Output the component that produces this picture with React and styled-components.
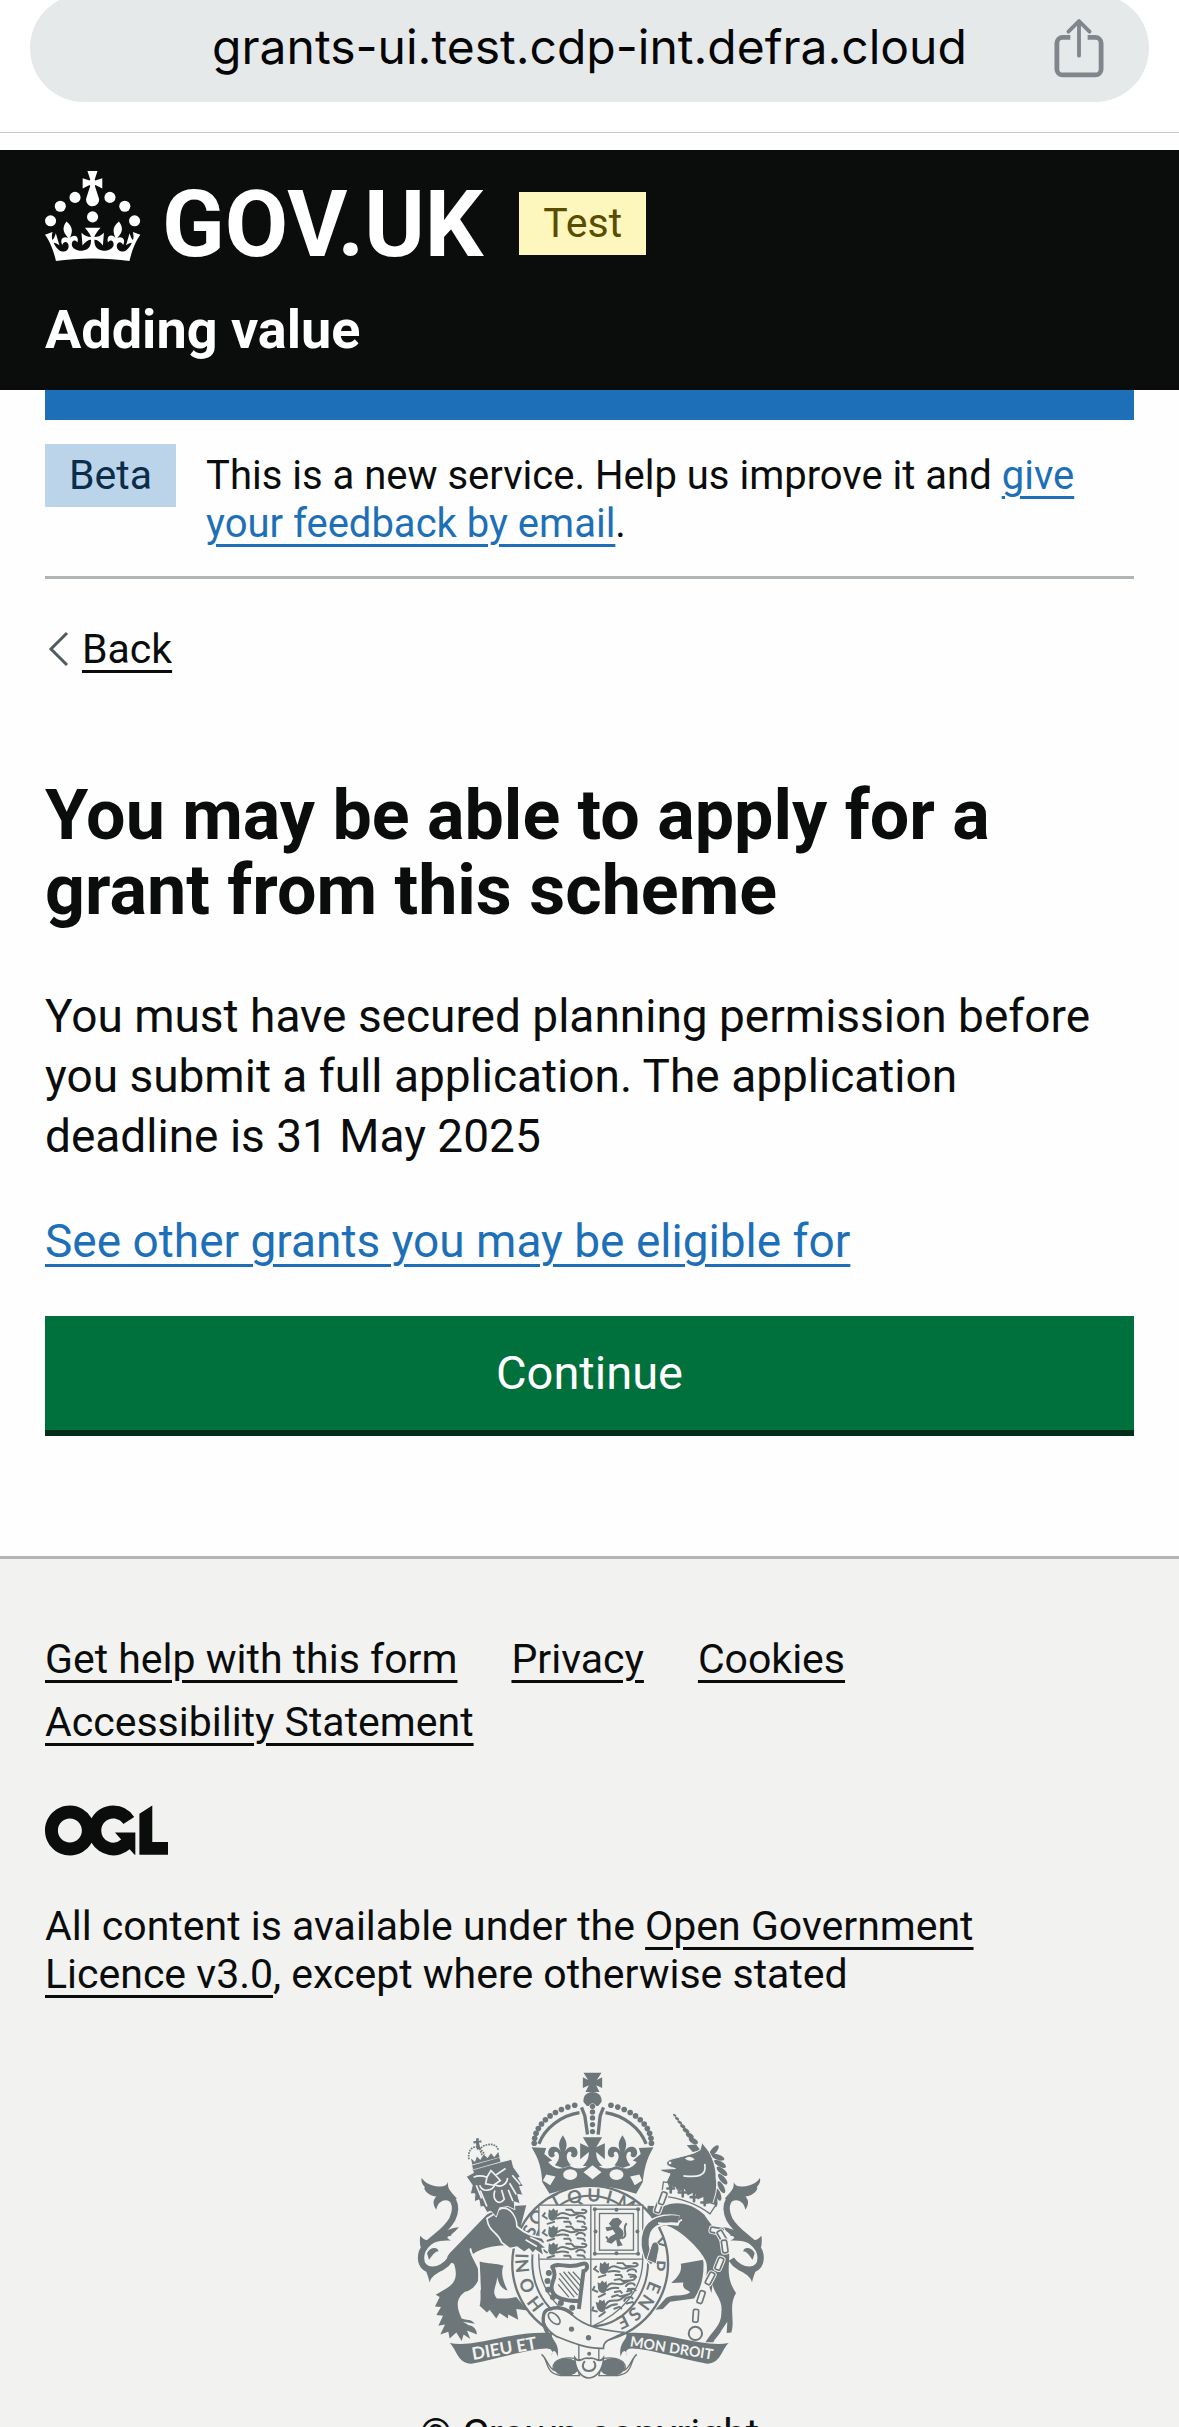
import React from "react";
import styled, { createGlobalStyle } from "styled-components";

const ink = "#0b0c0c";
const linkBlue = "#1d70b8";
const footerGrey = "#f2f2f0";
const crestGrey = "#6d7678";

const GlobalStyle = createGlobalStyle`
  *, *::before, *::after { box-sizing: border-box; }
  body {
    margin: 0;
    background: #fefefe;
    color: ${ink};
    font-family: Roboto, "Liberation Sans", sans-serif;
    font-size: 41px;
    line-height: 48px;
  }
`;

const Screen = styled.div`
  display: flex;
  flex-direction: column;
  height: 100vh;
  overflow: hidden;
`;

const BrowserChrome = styled.div`
  flex: none;
  padding: 0 30px 30px;
  margin-bottom: 17px;
  border-bottom: 1px solid #c6c8c8;
  background: #fff;
`;

const AddressBar = styled.div`
  display: grid;
  grid-template-columns: 120px 1fr 120px;
  align-items: center;
  height: 108px;
  margin-top: -6px;
  padding: 0 10px;
  border-radius: 54px;
  background: #e5e9ea;
`;

const AddressInput = styled.input`
  grid-column: 2;
  width: 100%;
  border: 0;
  padding: 0 0 2px;
  background: none;
  color: #050505;
  font: 400 48px/60px Inter, sans-serif;
  text-align: center;
`;

const ShareButton = styled.button`
  display: flex;
  justify-content: center;
  border: 0;
  padding: 0;
  background: none;
  color: #80868b;
`;

const Header = styled.header`
  flex: none;
  padding: 21px 45px 30px;
  background: ${ink};
  color: #fff;
`;

const LogoRow = styled.div`
  display: flex;
  align-items: flex-end;
  gap: 36px;
  margin-bottom: 39px;
`;

const LogoLink = styled.a`
  display: flex;
  align-items: flex-end;
  gap: 21px;
  color: inherit;
  text-decoration: none;
  font-size: 92px;
  line-height: 72px;
  font-weight: 700;
`;

const Tag = styled.strong`
  flex: none;
  padding: 7px 24px 8px;
  background: ${(p) => (p.$tone === "yellow" ? "#fdf6bd" : "#bbd4ea")};
  color: ${(p) => (p.$tone === "yellow" ? "#594d00" : "#0c2d4a")};
  font-weight: 400;
`;

const TestTag = styled(Tag)`
  margin-bottom: 6px;
`;

const ServiceLink = styled.a`
  display: block;
  color: inherit;
  text-decoration: none;
  font-size: 54px;
  line-height: 60px;
  font-weight: 700;
`;

const Container = styled.div`
  flex: none;
  padding: 0 45px;
`;

const BlueBar = styled.div`
  height: 30px;
  background: ${linkBlue};
`;

const PhaseBanner = styled.div`
  display: flex;
  align-items: flex-start;
  gap: 30px;
  padding: 24px 0 28px;
  border-bottom: 3px solid #b1b4b6;
`;

const PhaseText = styled.p`
  margin: 0;
  padding-top: 8px;
  font-size: 40px;
`;

const Link = styled.a`
  color: ${(p) => (p.$plain ? ink : linkBlue)};
  text-decoration: underline;
  text-decoration-thickness: 3px;
  text-underline-offset: 7px;
`;

const BackRow = styled.nav`
  display: flex;
  align-items: center;
  gap: 12px;
  padding: 46px 0 0 3px;
`;

const Main = styled.main`
  padding: 105px 0 120px;
`;

const Title = styled.h1`
  margin: 0 0 58px;
  font-size: 70px;
  line-height: 75px;
  font-weight: 700;
`;

const Paragraph = styled.p`
  margin: 0 0 45px;
  font-size: 46px;
  line-height: 60px;
`;

const ContinueButton = styled.button`
  display: block;
  width: 100%;
  border: 0;
  border-bottom: 6px solid #002d18;
  border-radius: 0;
  padding: 27px 30px;
  background: #00703c;
  color: #fff;
  font: inherit;
  font-size: 47px;
  line-height: 60px;
`;

const Footer = styled.footer`
  flex: none;
  border-top: 3px solid #b1b4b6;
  padding: 76px 45px 60px;
  background: ${footerGrey};
`;

const FooterLinks = styled.ul`
  display: flex;
  flex-wrap: wrap;
  gap: 15px 54px;
  margin: 0 0 59px;
  padding: 0;
  list-style: none;
`;

const Licence = styled.p`
  margin: 46px 0 74px;
  padding-right: 90px;
`;

const OglLogo = styled.svg`
  display: block;
`;

const Copyright = styled.a`
  display: flex;
  flex-direction: column;
  align-items: center;
  gap: 31px;
  color: ${ink};
  text-decoration: none;
`;

const ShareIcon = () => (
  <svg width="50" height="62" viewBox="0 0 52 62" fill="none" stroke="currentColor" strokeWidth="5" aria-hidden="true">
    <path d="M17 20H9a6 6 0 0 0-6 6v27a6 6 0 0 0 6 6h34a6 6 0 0 0 6-6V26a6 6 0 0 0-6-6h-8" />
    <path d="M26 39V4M15 14 26 3l11 11" strokeWidth="4" strokeLinejoin="round" strokeLinecap="round" />
  </svg>
);

const Crown = () => (
  <svg width="96" height="90" viewBox="0 0 64 60" fill="currentColor" aria-hidden="true">
    <circle cx="20" cy="17.6" r="3.7" />
    <circle cx="10.2" cy="23.5" r="3.7" />
    <circle cx="3.7" cy="33.2" r="3.7" />
    <circle cx="31.7" cy="30.6" r="3.7" />
    <circle cx="43.3" cy="17.6" r="3.7" />
    <circle cx="53.2" cy="23.5" r="3.7" />
    <circle cx="59.7" cy="33.2" r="3.7" />
    <path d="M33.1,9.8c.2-.1.3-.3.5-.5l4.6,2.4v-6.8l-4.6,1.5c-.1-.2-.3-.3-.5-.5l1.9-5.9h-6.7l1.9,5.9c-.2.1-.3.3-.5.5l-4.6-1.5v6.8l4.6-2.4c.1.2.3.3.5.5l-2.6,8c-.9,2.8,1.2,5.7,4.1,5.7h0c3,0,5.1-2.9,4.1-5.7l-2.6-8ZM37,37.9s-3.4,3.8-4.1,6.1c2.2,0,4.2-.5,6.4-2.8l-.7,8.5c-2-2.8-4.4-4.1-5.7-3.8.1,3.1.5,6.7,5.8,7.2,3.7.3,6.7-1.5,7-3.8.4-2.6-2-4.3-3.7-1.6-1.4-4.5,2.4-6.1,4.9-3.2-1.9-4.5-1.8-7.7,2.4-10.9,3,4,2.6,7.3-1.2,11.1,2.4-1.3,6.2,0,4,4.6-1.2-2.8-3.7-2.2-4.2.2-.3,1.7.7,3.7,3,4.2,1.9.3,4.7-.9,7-5.9-1.3,0-2.4.7-3.9,1.7l2.4-8c.6,2.3,1.4,3.7,2.2,4.5.6-1.6.5-2.8,0-5.3l5,1.8c-2.6,3.6-5.2,8.7-7.3,17.5-7.4-1.1-15.7-1.7-24.5-1.7h0c-8.8,0-17.1.6-24.5,1.7-2.1-8.9-4.7-13.9-7.3-17.5l5-1.8c-.5,2.5-.6,3.7,0,5.3.8-.8,1.6-2.3,2.2-4.5l2.4,8c-1.5-1-2.6-1.7-3.9-1.7,2.3,5,5.2,6.2,7,5.9,2.3-.4,3.3-2.4,3-4.2-.5-2.4-3-3.1-4.2-.2-2.2-4.6,1.6-6,4-4.6-3.7-3.7-4.2-7.1-1.2-11.1,4.2,3.2,4.3,6.4,2.4,10.9,2.5-2.8,6.3-1.3,4.9,3.2-1.8-2.7-4.1-1-3.7,1.6.3,2.3,3.3,4.1,7,3.8,5.4-.5,5.7-4.2,5.8-7.2-1.3-.2-3.7,1-5.7,3.8l-.7-8.5c2.2,2.3,4.2,2.7,6.4,2.8-.7-2.3-4.1-6.1-4.1-6.1h10.6,0Z" />
  </svg>
);

const garterLetters = [
  ["H", 408, 732, -128], ["O", 383, 677, -112], ["N", 368, 618, -95], ["I", 367, 588, -88],
  ["S", 390, 513, -62], ["O", 412, 472, -50], ["T", 468, 424, -27], ["Q", 525, 411, -12],
  ["U", 583, 406, 2], ["I", 629, 412, 15], ["M", 680, 432, 28], ["Y", 778, 550, 74],
  ["P", 778, 617, 94], ["E", 763, 683, 112], ["N", 740, 728, 126], ["S", 706, 763, 140], ["E", 670, 786, 154],
];

const archBeads = Array.from({ length: 11 }, (_, i) => {
  const a = ((108 + i * 7.2) * Math.PI) / 180;
  return [Math.cos(a) * 176, 250 - Math.sin(a) * 120];
});

const passantRows = [0, 1, 2];

const Passant = ({ x, y, r = 0 }) => (
  <g transform={`translate(${x} ${y}) rotate(${r})`}>
    <path d="M-52-20l7 5 7-8 6 8 7-4-1 16c-2 12-8 18-14 18-8 0-14-6-14-16z" />
    <path d="M-26-2c14-14 26-2 40 0 14 2 20-8 36-6M-28 8c14-4 22-4 34 0M30 6c8-10 26-6 26 2M48-18c14-2 18 8 4 10l-28-2-8-8h-16M-58 8l-12-8 6-8M-36 18l-20 6M-6 18h16l4 6M34 16l18 2 4 6" fill="none" stroke="currentColor" strokeWidth="6" strokeLinecap="round" />
  </g>
);

const Fleur = ({ x }) => (
  <g transform={`translate(${x} 272)`}>
    <path d="M0-46C14-26 14-12 5 4C16-18 42-16 44 4C45 20 30 26 24 14C30 8 22-2 14 8C8 20 14 32 24 44L0 52L-24 44C-14 32-8 20-14 8C-22-2-30 8-24 14C-30 26-45 20-44 4C-42-16-16-18-5 4C-14-12-14-26 0-46Z" />
  </g>
);

const Tail = () => (
  <g>
    <path d="M152 598C126 640 64 642 64 594C64 545 128 532 158 478C178 436 160 402 118 404" fill="none" stroke="currentColor" strokeWidth="19" />
    <path d="M66 354C84 378 106 378 122 380Q140 380 145 366C143 388 152 392 172 416L150 424C130 414 112 430 110 450C98 432 100 420 110 410C84 408 68 384 76 382C66 372 64 362 66 354Z" />
    <path d="M178 502C152 530 150 524 158 528C130 530 150 540 154 542C116 540 92 548 78 570L62 560C60 545 60 535 62 528C76 546 84 540 94 538C120 528 140 504 178 502Z" />
    <path d="M72 618C82 640 86 652 90 668C94 650 112 640 132 630Z" />
    <path d="M82 580C90 560 118 560 116 576C108 570 96 590 88 600Z" />
  </g>
);

const RibbonHalf = () => (
  <g>
    <path d="M150 850C230 866 340 810 460 820C446 836 484 846 474 892C472 876 458 862 456 890C466 862 440 866 420 868C370 874 280 900 215 912C174 912 172 870 150 850Z" />
    <path d="M426 884C450 900 430 950 500 948H540L526 896C480 890 450 910 464 932C446 926 446 900 426 884Z" fill={footerGrey} stroke="currentColor" strokeWidth="4" />
    <ellipse cx="500" cy="922" rx="38" ry="26" />
  </g>
);

const RoyalArms = () => (
  <svg width="349" height="307" viewBox="46 36 1048 922" fill="currentColor" color={crestGrey} aria-hidden="true">
    <Tail />
    <g transform="translate(1148 0) scale(-1 1)"><Tail /></g>

    {/* lion: hind quarters */}
    <path d="M262 464L150 580Q130 602 163 612C176 650 165 672 140 686L108 705L120 712L106 740L124 742L110 766L130 768L116 798L136 794L122 824L146 816L150 836L170 818L186 844L192 824L212 838L202 812L232 824Q230 800 206 796L190 786L226 792C214 776 200 782 186 776C168 740 170 715 196 696C226 690 240 660 242 640L215 586C260 552 320 560 350 552L380 436L310 440Z" />
    <path d="M240 605C262 612 292 610 312 618C300 640 316 676 324 692C306 690 288 664 292 622C300 680 270 690 292 716Q330 718 350 712L384 752L350 748L356 780L326 764L325 776L300 760L290 776L270 750L262 758L240 738C246 716 240 690 244 690Z" />
    <path d="M214 566C206 580 238 600 238 626C240 660 238 690 228 712" fill="none" stroke={footerGrey} strokeWidth="6" />

    {/* unicorn: body and hind legs */}
    <path d="M745 438L790 440C830 420 880 430 915 465C930 490 975 540 985 560C1000 600 970 640 1010 700C986 740 1008 780 996 818L982 820L984 786L966 812C960 826 946 836 942 848L918 848C940 812 968 796 966 756C972 720 940 696 940 672L936 700L928 676C916 640 925 630 912 590C890 556 840 508 800 496L760 506L740 470Z" />
    <path d="M912 600L844 612C850 640 830 655 816 670L852 668C846 690 868 690 872 698C850 712 820 702 800 714L768 750L790 748L812 726L884 716C904 690 915 650 912 600Z" />
    <path d="M908 592C926 610 920 640 912 668" fill="none" stroke={footerGrey} strokeWidth="6" />

    {/* garter */}
    <ellipse cx="572" cy="612" rx="234" ry="234" fill={footerGrey} stroke="currentColor" strokeWidth="7" />
    <ellipse cx="572" cy="604" rx="174" ry="196" fill="none" stroke="currentColor" strokeWidth="6" />
    <g fontFamily="Lato, sans-serif" fontSize="54" fontWeight="700" textAnchor="middle">
      {garterLetters.map(([ch, x, y, r], i) => (
        <text key={i} transform={`translate(${x} ${y}) rotate(${r})`} y="19">{ch}</text>
      ))}
    </g>

    {/* shield */}
    <path d="M418 436H730V598C730 690 670 760 573 802C476 760 418 690 418 598Z" fill={footerGrey} stroke="currentColor" strokeWidth="4" />
    <path d="M574 436V800M418 598H730" stroke="currentColor" strokeWidth="4" />
    {passantRows.map((n) => <Passant key={`a${n}`} x={500} y={468 + n * 51} />)}
    {passantRows.map((n) => <Passant key={`b${n}`} x={654 - n * 5} y={628 + n * 50} r={-n * 10} />)}
    <g fill="none" stroke="currentColor">
      <rect x="586" y="448" width="130" height="134" strokeWidth="4" />
      <rect x="600" y="461" width="102" height="110" strokeWidth="4" />
    </g>
    {[[586, 448], [716, 448], [586, 582], [716, 582], [651, 450], [651, 580], [588, 515], [714, 515]].map(([x, y]) => (
      <circle key={`${x}-${y}`} cx={x} cy={y} r="6" />
    ))}
    <path d="M628 492L640 476L656 474L668 486L658 500L670 512C676 526 668 536 660 540L670 556L654 560L650 540L636 552L620 546L632 530L648 522L640 510L622 514L618 502L636 500Z" />
    <path d="M666 536C692 530 664 506 682 490M620 530L632 548" fill="none" stroke="currentColor" strokeWidth="6" />
    <path d="M456 622C480 604 500 630 548 612C568 606 566 632 552 634L538 748M456 618C476 650 456 660 456 684C456 716 500 724 536 724" fill="none" stroke="currentColor" strokeWidth="12" />
    <path d="M480 640L534 706M492 636L540 694M506 636L544 680M520 636L546 664M478 656L524 712M476 674L508 712" stroke="currentColor" strokeWidth="4" />
    {[[448, 640], [444, 664], [446, 690], [460, 712], [484, 730], [518, 744]].map(([x, y]) => (
      <circle key={`${x}-${y}`} cx={x} cy={y} r="9" />
    ))}

    {/* lion: foreleg, mane, face and crown */}
    <path d="M284 462C320 420 352 466 352 500Q384 528 428 534L440 552L424 550L442 566L428 566L434 590L408 572L400 582L388 568L374 578L352 562L330 566L306 548C292 510 268 520 262 476Z" stroke={footerGrey} strokeWidth="5" />
    <path d="M200 350L222 338L216 328L336 298L342 322L362 350L356 354L372 380L360 380L370 406L354 404L362 432L344 426L346 450L326 440L300 444L290 472L274 454L262 458L252 440L242 442L238 420L224 426L226 402L212 402L218 376Z" stroke={footerGrey} strokeWidth="3" />
    <g fill="none" stroke={footerGrey} strokeWidth="5">
      <path d="M222 352Q240 344 262 352L274 332L288 346L318 326M262 352L258 372L282 376L302 362L288 346M240 376C250 400 280 392 286 374C300 384 322 376 324 354M286 392C276 420 298 440 314 418L306 390M242 392L262 440M330 370L350 404M326 390L340 424M230 376L246 416M338 346L362 374" />
      <path d="M378 540L412 560M392 532L426 548" />
    </g>
    <path d="M216 316L300 292L304 306L220 330Z" stroke={footerGrey} strokeWidth="2" />
    <path d="M214 296L226 306L232 290L242 300L252 284L264 294L274 280L284 292L296 276L300 292L218 314Z" />
    <path d="M208 298C202 262 230 256 240 264M244 264C262 248 294 250 296 272M240 266L248 288M240 264L256 284" fill="none" stroke="currentColor" strokeWidth="5" strokeDasharray="5 3" />
    <path d="M230 235h8l-1 8 8-2 1 7-8 0 4 18-10 4-3-20-7 1-1-7 8-1z" />

    {/* unicorn: foreleg */}
    <path d="M838 482C790 474 754 486 744 516C734 546 738 566 748 590L766 610" fill="none" stroke={footerGrey} strokeWidth="32" />
    <path d="M838 478C790 472 754 486 742 516C732 546 738 566 746 590L762 606" fill="none" stroke="currentColor" strokeWidth="21" />
    <path d="M756 556C766 536 786 550 776 580L770 612L742 600Z" stroke={footerGrey} strokeWidth="3" />
    <path d="M776 490L836 494Q838 482 848 480" fill="none" stroke={footerGrey} strokeWidth="5" />

    {/* unicorn: head, horn, mane and collar */}
    {[[826, 166, 6, 3], [833, 176, 7, 4], [841, 187, 8, 4], [850, 199, 9, 5], [860, 212, 11, 6], [871, 227, 13, 7], [882, 243, 15, 8]].map(([x, y, rx, ry]) => (
      <ellipse key={x} rx={rx} ry={ry} transform={`translate(${x} ${y}) rotate(32)`} />
    ))}
    <path d="M862 256L890 254L904 272L880 276Z" />
    {[[944, 272, -50], [956, 292, 20], [962, 312, 30], [968, 334, 40], [970, 358, 50], [966, 382, 62], [956, 404, 70], [946, 422, 80]].map(([x, y, r]) => (
      <ellipse key={y} rx="20" ry="8" transform={`translate(${x} ${y}) rotate(${r})`} />
    ))}
    <path d="M802 308Q806 298 822 296C850 288 880 284 902 270L908 248L922 266C940 286 952 330 950 352C956 390 946 410 940 432L850 398L800 368L812 342L785 334L784 328L828 326C812 322 800 318 802 308Z" stroke={footerGrey} strokeWidth="3" />
    <path d="M856 296Q872 284 886 298Q872 308 856 296Z" fill={footerGrey} />
    <circle cx="812" cy="309" r="4" fill={footerGrey} />
    <path d="M916 312C924 352 890 352 852 348" fill="none" stroke={footerGrey} strokeWidth="5" />
    <path d="M792 366L806 368L812 384L828 378L838 394L856 384L866 404L886 394L896 416L914 408L924 426L950 434L932 462C890 430 840 414 786 408Z" fill={footerGrey} stroke="currentColor" strokeWidth="4" />
    <path d="M814 372v26M804 386h20M850 382v28M838 398h24M884 394v30M874 412h22M916 410v26M906 428h20" stroke="currentColor" strokeWidth="8" strokeLinecap="round" />

    {/* chain */}
    <g fill="none" strokeLinejoin="round">
      {[[778, 440, 20], [790, 415, 20], [952, 512, -80], [968, 530, -30], [976, 560, -8], [960, 612, 22], [932, 656, 28], [905, 712, 18], [889, 768, 4]].map(([x, y, r]) => (
        <g key={x} transform={`translate(${x} ${y}) rotate(${r})`}>
          <rect x="-8" y="-19" width="16" height="38" rx="5" stroke={footerGrey} strokeWidth="11" />
          <rect x="-8" y="-19" width="16" height="38" rx="5" stroke="currentColor" strokeWidth="5" fill={footerGrey} />
        </g>
      ))}
      <circle cx="888" cy="821" r="20" stroke="currentColor" strokeWidth="6" />
    </g>

    {/* crown */}
    <path d="M552 38H606L592 60L608 52V84L590 76L600 96H558L568 76L550 84V52L566 60Z" />
    <path d="M579 96C600 96 608 112 606 126L596 138H562L552 126C550 112 558 96 579 96Z" />
    <path d="M566 140Q579 120 592 140V222H566Z" fill={footerGrey} />
    <path d="M546 142L556 168L564 224M612 142L602 168L596 224" fill="none" stroke="currentColor" strokeWidth="10" />
    {[139, 156, 174, 194, 215].map((y) => <circle key={y} cx="579" cy={y} r="8" />)}
    {archBeads.map(([dx, y]) => (
      <g key={y}><circle cx={580 + dx} cy={y} r="8.5" /><circle cx={580 - dx} cy={y} r="8.5" /></g>
    ))}
    <path d="M418 252C436 204 486 166 540 158M740 252C722 204 672 166 618 158" fill="none" stroke="currentColor" strokeWidth="10" />
    <path d="M396 262L440 264L434 282L458 302L446 306C470 336 492 324 510 318Q545 336 570 312H590Q615 336 650 318C668 324 690 336 712 306L700 302L724 282L718 264L762 262C740 300 734 330 730 366L710 402Q580 354 450 402L428 366C426 330 420 300 396 262Z" />
    <Fleur x={490} />
    <Fleur x={669} />
    <path d="M550 232H608L590 262L616 250V298L590 276C590 296 596 304 608 318H550C562 304 568 296 568 276L542 298V250L568 262Z" />
    <g fill={footerGrey}>
      <ellipse cx="512" cy="344" rx="21" ry="16" />
      <ellipse cx="651" cy="344" rx="21" ry="16" />
      <path d="M579 316L606 337L579 358L552 337ZM440 344L468 350L452 376L430 362ZM720 344L692 350L706 376L728 362Z" />
    </g>

    {/* ribbons, strap and buckle */}
    <RibbonHalf />
    <g transform="translate(1138 0) scale(-1 1)"><RibbonHalf /></g>
    <g fontFamily="Lato, sans-serif" fontWeight="700" fill={footerGrey}>
      <text transform="translate(220 901) rotate(-10)" fontSize="52">DIEU ET</text>
      <text transform="translate(690 860) rotate(9)" fontSize="43">MON DROIT</text>
    </g>
    <path d="M538 850V900H598V850Z" fill={footerGrey} stroke="currentColor" strokeWidth="4" />
    <path d="M432 760C438 738 486 740 516 764C560 806 620 812 672 818C650 836 610 836 612 866C560 868 510 846 470 830C440 810 428 790 432 760Z" fill={footerGrey} stroke="currentColor" strokeWidth="5" />
    <path d="M446 824C424 790 426 750 452 748C480 738 504 750 520 764" fill="none" stroke="currentColor" strokeWidth="10" />
    <ellipse cx="464" cy="776" rx="12" ry="22" fill="none" stroke="currentColor" strokeWidth="5" transform="rotate(-45 464 776)" />
    <circle cx="516" cy="808" r="8" />
    <circle cx="567" cy="834" r="8" />
    <circle cx="569" cy="882" r="6" />
    <path d="M526 894Q534 906 546 900Q556 894 568 896Q580 894 592 900Q604 906 612 894C612 930 590 954 568 955C546 954 526 930 526 894Z" fill={footerGrey} stroke="currentColor" strokeWidth="5" />
    <path d="M556 904C544 920 552 934 568 934C584 934 594 920 582 904" fill="none" stroke="currentColor" strokeWidth="6" />
  </svg>
);

const footerItems = ["Get help with this form", "Privacy", "Cookies", "Accessibility Statement"];

export default function App() {
  return (
    <>
      <GlobalStyle />
      <Screen>
        <BrowserChrome>
          <AddressBar>
            <AddressInput aria-label="Address" readOnly value="grants-ui.test.cdp-int.defra.cloud" />
            <ShareButton type="button" aria-label="Share"><ShareIcon /></ShareButton>
          </AddressBar>
        </BrowserChrome>

        <Header>
          <LogoRow>
            <LogoLink href="#home"><Crown /><span>GOV.UK</span></LogoLink>
            <TestTag $tone="yellow">Test</TestTag>
          </LogoRow>
          <ServiceLink href="#service">Adding value</ServiceLink>
        </Header>

        <Container>
          <BlueBar />
          <PhaseBanner>
            <Tag>Beta</Tag>
            <PhaseText>
              This is a new service. Help us improve it and <Link href="#feedback">give your feedback by email</Link>.
            </PhaseText>
          </PhaseBanner>
          <BackRow>
            <svg width="22" height="36" viewBox="0 0 22 36" fill="none" stroke="#505a5f" strokeWidth="3" aria-hidden="true">
              <path d="M19 2 3 18l16 16" />
            </svg>
            <Link $plain href="#back">Back</Link>
          </BackRow>
          <Main>
            <Title>You may be able to apply for a grant from this scheme</Title>
            <Paragraph>
              You must have secured planning permission before you submit a full application. The application deadline is 31 May 2025
            </Paragraph>
            <Paragraph><Link href="#grants">See other grants you may be eligible for</Link></Paragraph>
            <ContinueButton type="button">Continue</ContinueButton>
          </Main>
        </Container>

        <Footer>
          <FooterLinks>
            {footerItems.map((item) => (
              <li key={item}><Link $plain href="#footer">{item}</Link></li>
            ))}
          </FooterLinks>
          <OglLogo width="123" height="51" viewBox="0 0 483.2 195.7" fill={ink} aria-hidden="true">
            <path d="M421.5 142.8V.1l-50.7 32.3v161.1h112.4v-50.7zm-122.3-9.6A47.12 47.12 0 0 1 221 97.8c0-26 21.1-47.1 47.1-47.1 16.7 0 31.4 8.7 39.7 21.8l42.7-27.2A97.63 97.63 0 0 0 268.1 0c-36.5 0-68.3 20.1-85.1 49.7A98 98 0 0 0 97.8 0C43.9 0 0 43.9 0 97.8s43.9 97.8 97.8 97.8c36.5 0 68.3-20.1 85.1-49.7a97.76 97.76 0 0 0 149.6 25.4l19.4 22.2h3v-87.8h-80l24.3 27.5zM97.8 145c-26 0-47.1-21.1-47.1-47.1s21.1-47.1 47.1-47.1 47.1 21.1 47.1 47.1S123.8 145 97.8 145" />
          </OglLogo>
          <Licence>
            All content is available under the <Link $plain href="#licence">Open Government Licence v3.0</Link>, except where otherwise stated
          </Licence>
          <Copyright href="#copyright">
            <RoyalArms />
            <span>© Crown copyright</span>
          </Copyright>
        </Footer>
      </Screen>
    </>
  );
}
